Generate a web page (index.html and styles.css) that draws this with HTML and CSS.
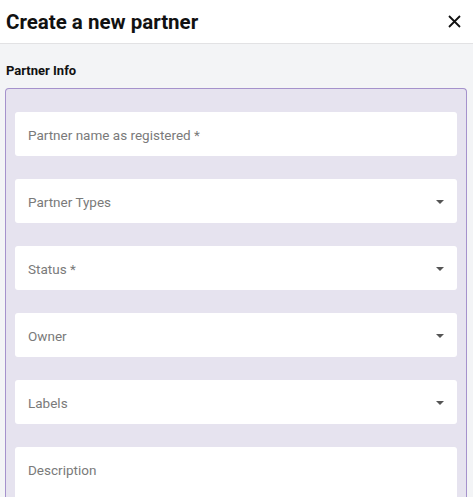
FILE: index.html
```html
<!DOCTYPE html>
<html lang="en">
  <head>
    <link rel="stylesheet" href="styles.css">
  </head>
  <body>
    <div class="header">
      <h1>Create a new partner</h1>
      <button class="close" aria-label="Close">
        <svg width="13" height="13" viewBox="0 0 13 13">
          <path d="M1 1L12 12M12 1L1 12" stroke="#111" stroke-width="1.8" />
        </svg>
      </button>
    </div>

    <div class="content">
      <h2>Partner Info</h2>
      <div class="panel">
        <div class="field">Partner name as registered *</div>
        <div class="field select">Partner Types <span class="caret"></span></div>
        <div class="field select">Status * <span class="caret"></span></div>
        <div class="field select">Owner <span class="caret"></span></div>
        <div class="field select">Labels <span class="caret"></span></div>
        <div class="field textarea">Description</div>
      </div>
    </div>
  </body>
</html>
```

FILE: styles.css
```css
* {
  box-sizing: border-box;
}

body {
  margin: 0;
  height: 497px;
  font-family: Roboto, "Noto Sans", sans-serif;
  background-color: #f3f4f6;
  overflow: hidden;
  display: flex;
  flex-direction: column;
}

.header {
  flex: none;
  height: 44px;
  background-color: #fff;
  border-bottom: 1px solid #e2e2e4;
  display: flex;
  align-items: center;
  justify-content: space-between;
  padding: 0 12px 0 6px;
}

.header h1 {
  margin: 0;
  font-size: 20.5px;
  font-weight: 700;
  color: #111;
}

.close {
  border: none;
  background: none;
  padding: 0;
  display: flex;
  cursor: pointer;
}

.content {
  flex: 1;
  min-height: 0;
  display: flex;
  flex-direction: column;
  padding: 18px 6px 0 5px;
}

.content h2 {
  margin: 0 0 0 1px;
  font-size: 13px;
  font-weight: 700;
  color: #111;
  line-height: 17px;
}

.panel {
  flex: 1;
  min-height: 0;
  overflow: hidden;
  margin-top: 9px;
  background-color: #e6e3ef;
  border: 1px solid #a592cc;
  border-bottom: none;
  border-radius: 4px 4px 0 0;
  padding: 23px 9px 0 9px;
  display: flex;
  flex-direction: column;
  gap: 23px;
}

.field {
  flex: none;
  height: 44px;
  background-color: #fff;
  border-radius: 3px;
  display: flex;
  align-items: center;
  justify-content: space-between;
  padding: 2px 13px 0;
  font-size: 13.5px;
  color: #7a7a7a;
}

.field.textarea {
  height: 88px;
  align-items: flex-start;
  padding-top: 15px;
}

.caret {
  width: 0;
  height: 0;
  border-left: 4px solid transparent;
  border-right: 4px solid transparent;
  border-top: 4px solid #555;
}
```
